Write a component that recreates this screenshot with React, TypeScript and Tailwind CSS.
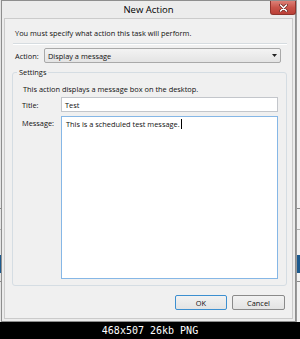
import React from "react";

function CloseButton() {
  return (
    <div className="-mr-[3px] flex h-[14px] w-[26px] items-center justify-center rounded-b-[3px] border border-t-0 border-[#8f342d] bg-gradient-to-b from-[#dc8077] via-[#c9544a] to-[#bb4037]">
      <svg width="9" height="8" viewBox="0 0 9 8">
        <path d="M1.5 1 L7.5 7 M7.5 1 L1.5 7" stroke="#6b2520" strokeWidth="3" strokeLinecap="round" />
        <path d="M1.5 1 L7.5 7 M7.5 1 L1.5 7" stroke="#ffffff" strokeWidth="1.6" strokeLinecap="round" />
      </svg>
    </div>
  );
}

function Button({ label, primary }: { label: string; primary?: boolean }) {
  return (
    <div
      className={
        primary
          ? "flex h-[15px] w-[52px] items-center justify-center rounded-[2px] border border-[#3c8fd0] bg-gradient-to-b from-[#f2f2f2] to-[#e3e3e3]"
          : "flex h-[15px] w-[53px] items-center justify-center rounded-[2px] border border-[#8a8a8a] bg-gradient-to-b from-[#f2f2f2] to-[#e3e3e3]"
      }
    >
      {label}
    </div>
  );
}

function DesktopEdge({ wide }: { wide?: boolean }) {
  return (
    <div className={wide ? "flex w-[4px] flex-col border-l border-[#9a9a9a] bg-[#f2f2f2]" : "flex w-[1px] flex-col bg-[#e4e4e4]"}>
      <div className="h-[208px]" />
      <div className="h-[1px] bg-[#8a8a8a]" />
      <div className="h-[20px]" />
      <div className="h-[1px] bg-[#b0b0b0]" />
      <div className="h-[25px]" />
      <div className="h-[18px] bg-[#1d5a8e]" />
      <div className="h-[8px]" />
      <div className="h-[1px] bg-[#8a8a8a]" />
    </div>
  );
}

function Window() {
  return (
    <div className="flex w-[295px] flex-col border border-[#8e8e8e] bg-[#ececec] px-[2px] pb-[2px]">
      <div className="grid h-[17px] grid-cols-[1fr_auto_1fr] items-start">
        <div />
        <span className="pt-[3px] font-['Open_Sans',sans-serif] text-[9.5px] leading-[12px] text-black">
          New Action
        </span>
        <div className="flex justify-end">
          <CloseButton />
        </div>
      </div>
      <div className="flex flex-1 flex-col border border-[#cbcbcb] bg-[#f0f0f0]">
        <p className="mt-[9px] pl-[10px] leading-[10px]">
          You must specify what action this task will perform.
        </p>
        <div className="ml-[8px] mt-[5px] w-[274px] border-t border-b border-t-[#d6dce0] border-b-white" />
        <div className="mt-[3px] flex items-center pl-[10px]">
          <span className="w-[29px] leading-[10px]">Action:</span>
          <div className="flex h-[15px] w-[237px] items-center justify-between rounded-[2px] border border-[#a9a9a9] bg-gradient-to-b from-[#f3f3f3] to-[#e4e4e4] pl-[3px] pr-[3px]">
            <span className="leading-[10px]">Display a message</span>
            <svg width="5" height="3" viewBox="0 0 5 3">
              <path d="M0 0 H5 L2.5 3 Z" fill="#222" />
            </svg>
          </div>
        </div>
        <fieldset className="ml-[7px] mt-[4px] w-[275px] rounded-[3px] border border-[#d5dde3] pb-[6px] pl-[9px] pr-[8px]">
          <legend className="-ml-[5px] px-[2px] leading-[10px]">Settings</legend>
          <p className="mt-[7px] pl-[1px] leading-[10px]">
            This action displays a message box on the desktop.
          </p>
          <div className="mt-[3px] flex items-center">
            <span className="w-[39px] leading-[10px]">Title:</span>
            <div className="flex h-[15px] w-[217px] items-center border border-[#c3c6cb] bg-white pl-[3px] leading-[10px]">
              Test
            </div>
          </div>
          <div className="mt-[4px] flex items-start">
            <span className="mt-[2px] w-[39px] leading-[10px]">Message:</span>
            <div className="flex h-[163px] w-[217px] items-start border border-[#86b7e6] bg-white pl-[4px] pt-[2px]">
              <span className="leading-[10px]">This is a scheduled test message.</span>
              <span className="ml-[1px] h-[10px] w-[1px] bg-black" />
            </div>
          </div>
        </fieldset>
        <div className="mb-[8px] mt-auto flex justify-end gap-[5px] pr-[7px] leading-[10px]">
          <Button label="OK" primary />
          <Button label="Cancel" />
        </div>
      </div>
    </div>
  );
}

export default function App() {
  return (
    <div className="flex h-[339px] w-[300px] flex-col bg-black font-['Open_Sans',sans-serif] text-[7.4px] text-[#111111]">
      <div className="flex h-[322px]">
        <DesktopEdge />
        <Window />
        <DesktopEdge wide />
      </div>
      <div className="flex h-[17px] items-center justify-center font-['DejaVu_Sans_Mono',monospace] text-[10px] text-white">
        468x507 26kb PNG
      </div>
    </div>
  );
}
